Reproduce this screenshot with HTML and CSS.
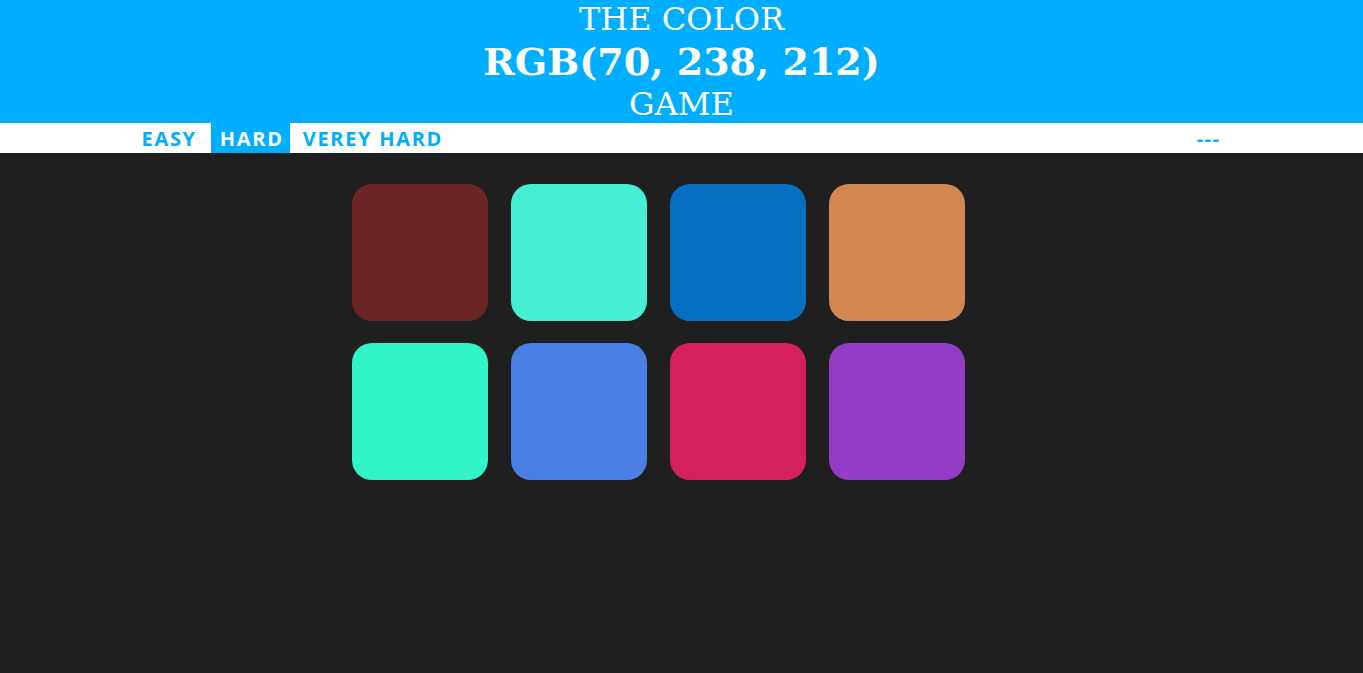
FILE: index.html
```html
<!DOCTYPE html>
<html>
<head>
<meta charset="utf-8">
<title>Color Game</title>
<link rel="stylesheet" href="styles.css">
</head>
<body>
<h1 class="title">
  <span class="title-line">The color</span>
  <span class="color-display">RGB(70, 238, 212)</span>
  <span class="title-line">game</span>
</h1>
<div class="stripe">
  <div class="stripe-inner">
    <div class="modes">
      <button class="mode">Easy</button>
      <button class="mode selected">Hard</button>
      <button class="mode">Verey Hard</button>
    </div>
    <span class="message">---</span>
  </div>
</div>
<div class="board">
  <div class="square" style="background:#6a2422"></div>
  <div class="square" style="background:#46eed4"></div>
  <div class="square" style="background:#0570c2"></div>
  <div class="square" style="background:#d38851"></div>
  <div class="square" style="background:#31f5c9"></div>
  <div class="square" style="background:#4a7fe3"></div>
  <div class="square" style="background:#d4215d"></div>
  <div class="square" style="background:#933dc6"></div>
</div>
</body>
</html>
```
FILE: styles.css
```css
html, body {
  margin: 0;
  padding: 0;
}
body {
  background: #1f1f1f;
  height: 673px;
  overflow: hidden;
}
.title {
  margin: 0;
  padding-top: 1px;
  box-sizing: border-box;
  background: #00aeff;
  color: #fff;
  font-family: "DejaVu Serif", serif;
  font-weight: normal;
  text-transform: uppercase;
  text-align: center;
  height: 123px;
  display: flex;
  flex-direction: column;
  align-items: center;
}
.title-line {
  font-size: 32px;
  line-height: 37px;
}
.color-display {
  font-size: 38px;
  font-weight: bold;
  line-height: 48px;
}
.stripe {
  background: #fff;
  height: 30px;
}
.stripe-inner {
  width: 1098px;
  margin: 0 auto;
  display: flex;
  justify-content: space-between;
  align-items: center;
  height: 30px;
}
.modes {
  display: flex;
  gap: 4px;
  height: 30px;
}
.mode {
  border: none;
  background: #fff;
  color: #00aeff;
  font-family: "Open Sans", sans-serif;
  font-weight: bold;
  font-size: 20px;
  letter-spacing: 1.7px;
  text-transform: uppercase;
  padding: 0 7px 0 9px;
  height: 30px;
  line-height: 32px;
  margin: 0;
}
.mode:first-child {
  padding-right: 10px;
}
.mode.selected {
  background: #00aeff;
  color: #fff;
  padding-right: 6px;
}
.message {
  color: #00aeff;
  font-family: "Open Sans", sans-serif;
  font-weight: bold;
  font-size: 20px;
  letter-spacing: 1.5px;
  margin-right: 10px;
}
.board {
  width: 613px;
  margin: 31px 0 0 352px;
  display: grid;
  grid-template-columns: repeat(4, 136px);
  column-gap: 23px;
  row-gap: 22px;
}
.square {
  height: 137px;
  border-radius: 20px;
}
```
